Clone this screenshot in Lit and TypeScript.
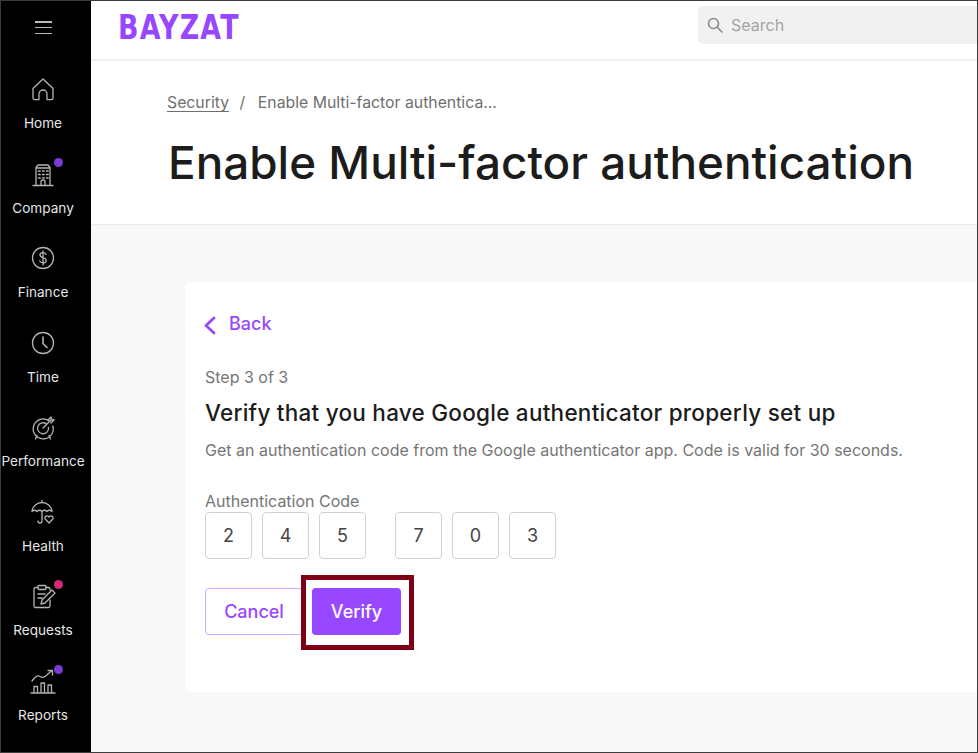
import { LitElement, html, css, svg } from "lit";
import { customElement } from "lit/decorators.js";

const icons: Record<string, unknown> = {
  home: svg`<path d="M3 12.500 13 3l10 9.500V22a1.600 1.600 0 0 1-1.600 1.600H17V18a4 4 0 0 0-8 0v5.600H4.600A1.600 1.600 0 0 1 3 22z"/>`,
  company: svg`<path d="M6 24V6.500L8 4h10l2 2.500V24M6 7h14M3 24.500h20"/><path d="M11 24v-3a2 2 0 0 1 4 0v3"/><path stroke-dasharray="1.600 2.400" stroke-width="1.600" d="M8.500 10h10M8.500 13.500h10M8.500 17h10"/>`,
  finance: svg`<circle cx="13" cy="13" r="10.500"/><path d="M16 9.500c-.5-1.300-1.500-1.800-3-1.800-1.800 0-3 .9-3 2.400 0 3.400 6.200 1.900 6.200 5.300 0 1.500-1.300 2.500-3.200 2.500-1.600 0-2.800-.6-3.300-2M13 6v14"/>`,
  time: svg`<circle cx="13" cy="13" r="10.500"/><path d="M13 7v6.500l4 4" stroke-width="1.600"/>`,
  performance: svg`<path d="M20 7.500A10 10 0 1 0 22.800 12"/><path d="M16.500 10a5.500 5.500 0 1 0 2 3.500"/><path d="M13 14l8-8M18 6l3-3 .5 2.500L24 6l-3 3M7 21.500 5.500 25M19 21.500l1.500 3.500"/>`,
  health: svg`<path d="M2 12.500C2.500 7 7 3.500 12 3.500s9.500 3.500 10 9c-1.500-1.500-3.500-1.500-5 0-1.500-1.500-3.500-1.500-5 0-1.500-1.500-3.500-1.500-5 0-1.500-1.500-3.500-1.500-5 0zM12 1.500v2M12 12.500v9.500a2 2 0 0 1-4 0"/><path d="M19 24l-3.600-3.800c-1.800-2.200 1.600-4.700 3.600-2.200 2-2.500 5.400 0 3.600 2.200z"/>`,
  requests: svg`<path d="M8 4.500H5.500A1.500 1.500 0 0 0 4 6v17a1.500 1.500 0 0 0 1.500 1.500h13A1.500 1.500 0 0 0 20 23v-6M16 4.500h2.500A1.500 1.500 0 0 1 20 6v1"/><rect x="8" y="2.500" width="8" height="4" rx="1"/><path d="M8 11h7M8 15h4M11 21l1-4L22 7l3 3-10 10z"/>`,
  reports: svg`<path d="M2 13c3-4 5-6 7-5s3 2 5 1 6-5 8-6.500M18 2.500h4.500V7M1 25h24M4 24v-5.500h3.500V24M11 24v-9h3.500v9M18 24v-7h3.500v7"/>`,
};

const nav = [
  { label: "Home", icon: "home" },
  { label: "Company", icon: "company", dot: "purple" },
  { label: "Finance", icon: "finance" },
  { label: "Time", icon: "time" },
  { label: "Performance", icon: "performance" },
  { label: "Health", icon: "health" },
  { label: "Requests", icon: "requests", dot: "pink" },
  { label: "Reports", icon: "reports", dot: "purple" },
];

@customElement("app-root")
export class AppRoot extends LitElement {
  static styles = css`
    :host {
      display: block;
      width: 978px;
      height: 753px;
      box-sizing: border-box;
      border: 1px solid #3c3c3c;
      font-family: Inter, "Liberation Sans", sans-serif;
      position: relative;
      overflow: hidden;
      background: #fff;
    }
    .shell { display: flex; height: 100%; }
    .side {
      width: 90px;
      flex: none;
      padding-right: 6px;
      box-sizing: border-box;
      background: #000;
      color: #e4e6e8;
      display: flex;
      flex-direction: column;
      align-items: center;
    }
    .burger { margin-top: 20px; width: 17px; height: 13px; display: flex; flex-direction: column; justify-content: space-between; }
    .burger i { display: block; height: 1.500px; background: #b9b9b9; }
    .items { margin-top: 41px; display: flex; flex-direction: column; width: 100%; }
    .item { height: 84.500px; display: flex; flex-direction: column; align-items: center; font-size: 13.600px; line-height: 18px; white-space: nowrap; }
    .ic { position: relative; width: 26px; height: 26px; margin-top: 1px; margin-bottom: 12px; }
    .ic svg { display: block; width: 26px; height: 26px; fill: none; stroke: #b4b4b4; stroke-width: 1.300; stroke-linecap: round; stroke-linejoin: round; }
    .dot { position: absolute; top: -3px; right: -7px; width: 9px; height: 9px; border-radius: 50%; }
    .dot.purple { background: #7d3bd6; }
    .dot.pink { background: #d42a78; }
    .main { flex: 1; min-width: 0; display: flex; flex-direction: column; }
    .top { height: 58px; border-bottom: 2px solid #f0f0f0; display: flex; align-items: center; justify-content: space-between; flex: none; }
    .logo { margin-left: 27px; margin-top: -6px; color: #9747ff; font-size: 34px; line-height: 32px; font-weight: 800; letter-spacing: 1.500px; font-family: "DejaVu Sans", sans-serif; transform: scaleX(0.79); transform-origin: left center; white-space: nowrap; }
    .search { width: 279px; height: 38px; margin-top: -11px; background: #f1f1f1; border-radius: 5px 0 0 5px; display: flex; align-items: center; gap: 8px; padding-left: 9px; box-sizing: border-box; color: #a5a5a5; font-size: 16px; }
    .search svg { width: 16px; height: 16px; fill: none; stroke: #8a8a8a; stroke-width: 1.600; stroke-linecap: round; }
    .head { height: 164px; border-bottom: 1px solid #ececec; flex: none; padding-left: 76px; box-sizing: border-box; }
    .crumbs { padding-top: 32px; font-size: 15.800px; line-height: 20px; color: #6f6f6f; display: flex; gap: 10.500px; }
    .crumbs u { text-underline-offset: 3px; }
    .crumbs span + span { margin-left: 2px; }
    h1 { margin: 22px 0 0 1px; font-size: 45.850px; line-height: 56px; font-weight: 500; color: #1c1c1c; white-space: nowrap; }
    .body { flex: 1; background: #f8f8f8; padding: 57px 0 0 94px; min-height: 0; }
    .card { background: #fff; height: 410px; border-radius: 6px 0 0 6px; padding: 30px 0 0 20px; box-sizing: border-box; }
    .back { display: flex; align-items: center; gap: 12px; color: #9747ff; font-size: 18px; line-height: 24px; font-weight: 500; margin-left: -2px; }
    .back svg { width: 14px; height: 20px; fill: none; stroke: #9747ff; stroke-width: 2.800; stroke-linecap: round; stroke-linejoin: round; margin-top: 2px; }
    .step { margin-top: 31px; font-size: 16px; line-height: 20px; color: #757575; }
    h2 { margin: 12px 0 0; font-size: 22.500px; line-height: 28px; font-weight: 500; letter-spacing: 0.250px; color: #1c1c1c; white-space: nowrap; }
    .desc { margin-top: 13px; font-size: 16px; line-height: 20px; color: #757575; white-space: nowrap; }
    .lab { margin-top: 31px; font-size: 16px; line-height: 20px; color: #757575; }
    .code { display: flex; margin-top: 1px; }
    .digit { width: 47px; height: 47px; box-sizing: border-box; border: 1px solid #d2d2d2; border-radius: 4px; display: flex; align-items: center; justify-content: center; font-size: 18px; color: #444; margin-right: 10px; }
    .digit.gap { margin-right: 29px; }
    .actions { display: flex; margin-top: 29px; align-items: stretch; height: 47px; }
    .btn { box-sizing: border-box; border-radius: 4px; display: flex; align-items: center; justify-content: center; font-size: 18px; font-weight: 500; }
    .cancel { width: 98px; border: 1px solid #cfa8ff; color: #9747ff; background: #fff; margin-right: 9px; }
    .verify { width: 89px; background: #9747ff; color: #fff; position: relative; }
    .mark { position: absolute; left: 300px; top: 574px; width: 113px; height: 75px; box-sizing: border-box; border: 5px solid #7f0014; pointer-events: none; }
  `;

  render() {
    return html`
      <div class="shell">
        <aside class="side">
          <div class="burger"><i></i><i></i><i></i></div>
          <div class="items">
            ${nav.map(
              (n) => html`<div class="item">
                <div class="ic">
                  <svg viewBox="0 0 26 26">${icons[n.icon]}</svg>
                  ${n.dot ? html`<span class="dot ${n.dot}"></span>` : ""}
                </div>
                <span>${n.label}</span>
              </div>`
            )}
          </div>
        </aside>
        <main class="main">
          <header class="top">
            <div class="logo">BAYZAT</div>
            <div class="search">
              <svg viewBox="0 0 16 16"><circle cx="6.500" cy="6.500" r="5"/><path d="M10.500 10.500 15 15"/></svg>
              <span>Search</span>
            </div>
          </header>
          <section class="head">
            <div class="crumbs"><u>Security</u><span>/</span><span>Enable Multi-factor authentica...</span></div>
            <h1>Enable Multi-factor authentication</h1>
          </section>
          <section class="body">
            <div class="card">
              <div class="back">
                <svg viewBox="0 0 14 20"><path d="M11 3 3 10.500l8 7.500"/></svg>
                <span>Back</span>
              </div>
              <div class="step">Step 3 of 3</div>
              <h2>Verify that you have Google authenticator properly set up</h2>
              <div class="desc">Get an authentication code from the Google authenticator app. Code is valid for 30 seconds.</div>
              <div class="lab">Authentication Code</div>
              <div class="code">
                <div class="digit">2</div><div class="digit">4</div><div class="digit gap">5</div>
                <div class="digit">7</div><div class="digit">0</div><div class="digit">3</div>
              </div>
              <div class="actions">
                <div class="btn cancel">Cancel</div>
                <div class="btn verify">Verify</div>
              </div>
            </div>
          </section>
        </main>
      </div>
      <div class="mark"></div>
    `;
  }
}
